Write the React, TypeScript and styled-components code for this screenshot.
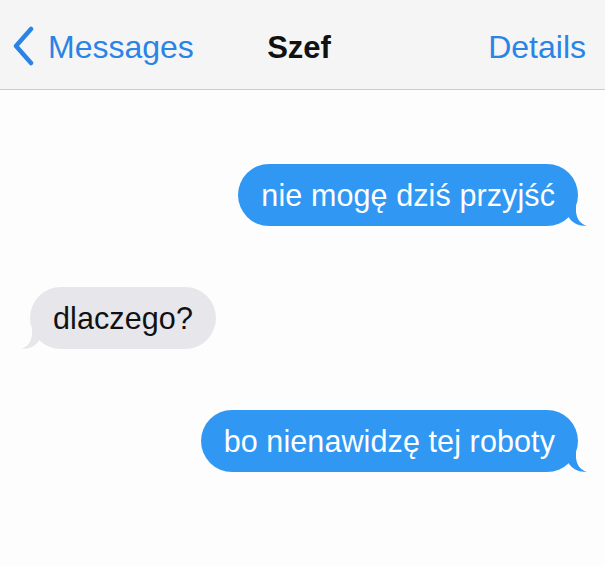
import { FC } from "react";
import styled, { createGlobalStyle } from "styled-components";

type Side = "me" | "them";

const messages: { side: Side; text: string }[] = [
  { side: "me", text: "nie mogę dziś przyjść" },
  { side: "them", text: "dlaczego?" },
  { side: "me", text: "bo nienawidzę tej roboty" },
];

const colors = {
  blue: "#3097f3",
  gray: "#e6e6eb",
  link: "#2a84e6",
};

const Tail: FC<{ side: Side }> = ({ side }) => (
  <TailSvg side={side} width="24" height="22" viewBox="0 0 24 22">
    <path
      d="M0 0 C2 8 4 14 9 18 C13 21 18 22 23 22 C17 20 13 16 12 8 L12 0 Z"
      fill={side === "me" ? colors.blue : colors.gray}
    />
  </TailSvg>
);

export default function App() {
  return (
    <>
      <GlobalStyle />
      <Screen>
        <NavBar>
          <BackButton>
            <svg width="22" height="40" viewBox="0 0 22 40">
              <path
                d="M19 3 L4 20 L19 37"
                fill="none"
                stroke={colors.link}
                strokeWidth="4.5"
                strokeLinecap="round"
                strokeLinejoin="round"
              />
            </svg>
            <span>Messages</span>
          </BackButton>
          <Title>Szef</Title>
          <NavLink>Details</NavLink>
        </NavBar>
        <Thread>
          {messages.map((m, i) => (
            <Row key={i} side={m.side}>
              <Bubble side={m.side}>
                {m.text}
                <Tail side={m.side} />
              </Bubble>
            </Row>
          ))}
        </Thread>
      </Screen>
    </>
  );
}

const GlobalStyle = createGlobalStyle`
  html, body {
    margin: 0;
    padding: 0;
    background: #fdfdfd;
  }
  body {
    font-family: "Liberation Sans", Arial, sans-serif;
  }
`;

const Screen = styled.div`
  width: 605px;
  height: 566px;
  background: #fdfdfd;
  overflow: hidden;
`;

const NavBar = styled.div`
  height: 90px;
  box-sizing: border-box;
  background: #f5f5f5;
  border-bottom: 1px solid #cdcdcd;
  display: grid;
  grid-template-columns: 1fr auto 1fr;
  align-items: center;
  padding: 6px 19px 0 12px;
  font-size: 32px;
`;

const BackButton = styled.div`
  display: flex;
  align-items: center;
  gap: 14px;
  color: ${colors.link};
  svg {
    display: block;
    margin-top: -4px;
  }
`;

const Title = styled.div`
  font-weight: bold;
  font-size: 31px;
  color: #111;
  margin-left: 0;
`;

const NavLink = styled.div`
  color: ${colors.link};
  justify-self: end;
`;

const Thread = styled.div`
  display: flex;
  flex-direction: column;
  gap: 61px;
  padding: 74px 27px 0 30px;
`;

const Row = styled.div<{ side: Side }>`
  display: flex;
  justify-content: ${({ side }) => (side === "me" ? "flex-end" : "flex-start")};
`;

const Bubble = styled.div<{ side: Side }>`
  position: relative;
  height: 62px;
  box-sizing: border-box;
  display: flex;
  align-items: center;
  padding: 0 23px;
  border-radius: 31px;
  font-size: 30.5px;
  letter-spacing: 0.1px;
  background: ${({ side }) => (side === "me" ? colors.blue : colors.gray)};
  color: ${({ side }) => (side === "me" ? "#ffffff" : "#111111")};
`;

const TailSvg = styled.svg<{ side: Side }>`
  position: absolute;
  bottom: 0;
  ${({ side }) =>
    side === "me"
      ? "right: -10px;"
      : "left: -10px; transform: scaleX(-1);"}
`;
